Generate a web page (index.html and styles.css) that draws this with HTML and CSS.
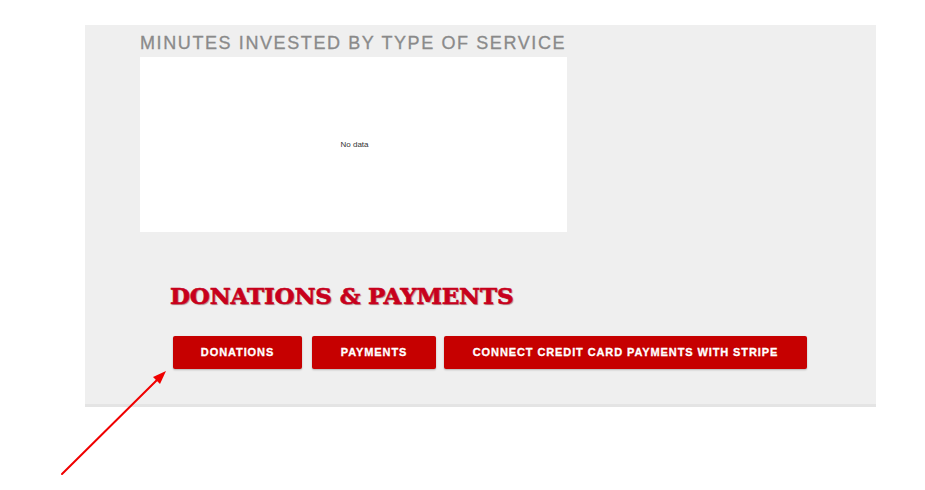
FILE: index.html
```html
<!DOCTYPE html>
<html lang="en">
<head>
    <meta charset="UTF-8">
    <title>Dashboard</title>
    <link rel="stylesheet" href="styles.css">
</head>
<body>
    <div class="panel">
        <div class="chart-block">
            <h3 class="chart-title">Minutes Invested by Type of Service</h3>
            <div class="chart">
                <span class="chart-empty">No data</span>
            </div>
        </div>

        <div class="payments">
            <h2 class="payments-title">Donations &amp; Payments</h2>
            <div class="btn-row">
                <a href="#" class="btn btn-donations">Donations</a>
                <a href="#" class="btn btn-payments">Payments</a>
                <a href="#" class="btn btn-stripe">Connect Credit Card Payments with Stripe</a>
            </div>
        </div>
    </div>

    <!-- pointer arrow -->
    <svg class="pointer" width="120" height="120" viewBox="0 0 120 120">
        <line x1="2" y1="113" x2="98" y2="18" stroke="#f00000" stroke-width="2" stroke-linecap="round"/>
        <polygon points="106,10 93,16 100,23" fill="#f00000"/>
    </svg>
</body>
</html>
```

FILE: styles.css
```css
body {
    margin: 0;
    padding: 0;
    background: #fff;
    font-family: "Liberation Sans", Arial, sans-serif;
    position: relative;
    min-height: 490px;
}

.panel {
    margin: 25px 0 0 85px;
    width: 791px;
    height: 382px;
    background: #efefef;
    border-bottom: 3px solid #e4e4e4;
    padding: 6px 0 0 55px;
    box-sizing: border-box;
}

.chart-title {
    margin: 0;
    font-size: 18px;
    font-weight: normal;
    text-transform: uppercase;
    letter-spacing: 1.6px;
    color: #8a8a8a;
    line-height: 24px;
    -webkit-text-stroke: 0.3px #8a8a8a;
}

.chart {
    margin-top: 2px;
    width: 427px;
    height: 175px;
    background: #fff;
    display: flex;
    justify-content: center;
    align-items: center;
}

.chart-empty {
    font-size: 8px;
    color: #333;
    margin-left: 2px;
    margin-top: 0;
}

.payments {
    padding: 49px 0 0 30px;
}

.payments-title {
    margin: 0;
    font-family: "DejaVu Serif", "Liberation Serif", serif;
    font-size: 23px;
    font-weight: bold;
    text-transform: uppercase;
    letter-spacing: -0.15px;
    color: #c8001c;
    line-height: 30px;
    -webkit-text-stroke: 0.6px #c8001c;
    text-shadow: 1px 1px 1px rgba(90, 0, 0, 0.45);
}

.btn-row {
    display: flex;
    gap: 9px;
    margin: 25px 0 0 3px;
}

.btn {
    display: flex;
    justify-content: center;
    align-items: center;
    height: 33px;
    padding-bottom: 2px;
    box-sizing: border-box;
    background: #c60000;
    color: #fff;
    text-decoration: none;
    text-transform: uppercase;
    font-size: 11px;
    font-weight: bold;
    letter-spacing: 0.9px;
    -webkit-text-stroke: 0.3px #fff;
    border-radius: 2px;
    box-shadow: 0 1px 2px rgba(0, 0, 0, 0.25);
}

.btn-donations {
    width: 129px;
}

.btn-payments {
    width: 124px;
    margin-left: 1px;
}

.btn-stripe {
    width: 363px;
    margin-left: -1px;
}

.pointer {
    position: absolute;
    left: 60px;
    top: 361px;
}
```
